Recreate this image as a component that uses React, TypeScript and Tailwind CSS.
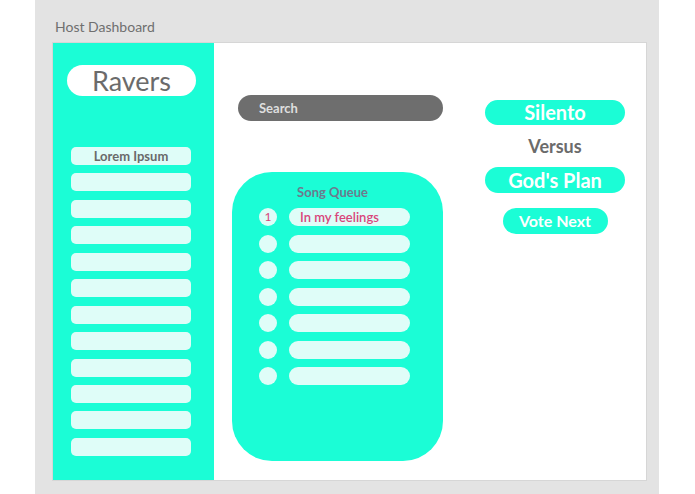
import * as React from 'react';

// -----------------------------------------------------------------------------
// DATA
// -----------------------------------------------------------------------------

const sidebarItems = ['Lorem Ipsum', '', '', '', '', '', '', '', '', '', '', ''];

const queue = [
  { pos: '1', title: 'In my feelings' },
  { pos: '', title: '' },
  { pos: '', title: '' },
  { pos: '', title: '' },
  { pos: '', title: '' },
  { pos: '', title: '' },
  { pos: '', title: '' }
];

// -----------------------------------------------------------------------------
// SIDEBAR
// -----------------------------------------------------------------------------

function Sidebar() {
  return (
    <aside className="w-[161px] h-full bg-[#1bfdd6] flex flex-col">
      <div className="ml-[14px] mt-[22px] w-[129px] h-[31px] rounded-full bg-white flex items-center justify-center">
        <span className="text-[27px] leading-none text-[#6b6b6b] pb-[1px]">Ravers</span>
      </div>

      <div className="ml-[18px] mt-[51px] flex flex-col gap-[8.45px]">
        {sidebarItems.map((label, index) => (
          <div
            key={index}
            className="w-[120px] h-[18px] rounded-[5px] bg-[#dffdf8] flex items-center justify-center"
          >
            {label && (
              <span className="text-[13px] font-bold leading-none text-[#6a6a6a]">{label}</span>
            )}
          </div>
        ))}
      </div>
    </aside>
  );
}

// -----------------------------------------------------------------------------
// SONG QUEUE
// -----------------------------------------------------------------------------

function SongQueue() {
  return (
    <div className="mt-[51px] w-[211px] h-[289px] rounded-[40px] bg-[#1bfdd6] flex flex-col">
      <p className="pt-[13px] pr-[10px] text-center text-[13px] leading-[14px] font-bold text-[#6d7a8e]">
        Song Queue
      </p>
      <div className="mt-[9px] ml-[27px] flex flex-col gap-[8.5px]">
        {queue.map((song, index) => (
          <div key={index} className="flex items-center gap-[12px]">
            <div className="w-[18px] h-[18px] rounded-full bg-[#dffdf8] flex items-center justify-center">
              <span className="text-[12px] leading-none text-[#d9467b]">{song.pos}</span>
            </div>
            <div className="w-[121px] h-[18px] rounded-full bg-[#dffdf8] flex items-center pl-[11px]">
              <span className="text-[13px] leading-none font-semibold text-[#d9467b]">{song.title}</span>
            </div>
          </div>
        ))}
      </div>
    </div>
  );
}

// -----------------------------------------------------------------------------
// VOTING
// -----------------------------------------------------------------------------

function Voting() {
  return (
    <div className="ml-[42px] pt-[57px] w-[140px] flex flex-col items-center">
      <div className="w-[140px] h-[25px] rounded-full bg-[#1bfdd6] flex items-center justify-center">
        <span className="text-[20px] leading-none font-bold text-white pb-[1px]">Silento</span>
      </div>
      <div className="h-[42px] flex items-center justify-center">
        <span className="text-[18px] leading-none font-bold text-[#6b6b6b]">Versus</span>
      </div>
      <div className="w-[140px] h-[26px] rounded-full bg-[#1bfdd6] flex items-center justify-center">
        <span className="text-[20px] leading-none font-bold text-white pb-[1px]">God's Plan</span>
      </div>
      <div className="mt-[15px] w-[105px] h-[26px] rounded-full bg-[#1bfdd6] flex items-center justify-center">
        <span className="text-[16px] leading-none font-bold text-white pb-[1px]">Vote Next</span>
      </div>
    </div>
  );
}

// -----------------------------------------------------------------------------
// APP
// -----------------------------------------------------------------------------

export default function App() {
  return (
    <div
      className="w-[695px] h-[494px] bg-white flex"
      style={{ fontFamily: 'Lato, "Noto Sans", sans-serif' }}
    >
      <div className="ml-[35px] w-[624px] h-full bg-[#e3e3e3] flex flex-col">
        <div className="h-[42px] flex items-end pl-[20px] pb-[8px]">
          <span className="text-[14px] leading-none text-[#6f6f6f]">Host Dashboard</span>
        </div>

        <div className="ml-[17px] w-[595px] h-[439px] bg-white border border-[#d6d6d6] flex">
          <Sidebar />

          <main className="flex-1 flex">
            <div className="ml-[18px] pt-[52px] flex flex-col">
              <div className="ml-[6px] w-[205px] h-[26px] rounded-full bg-[#6e6e6e] flex items-center pl-[21px]">
                <span className="text-[13px] leading-none font-bold text-[#dedede]">Search</span>
              </div>
              <SongQueue />
            </div>
            <Voting />
          </main>
        </div>
      </div>
    </div>
  );
}
